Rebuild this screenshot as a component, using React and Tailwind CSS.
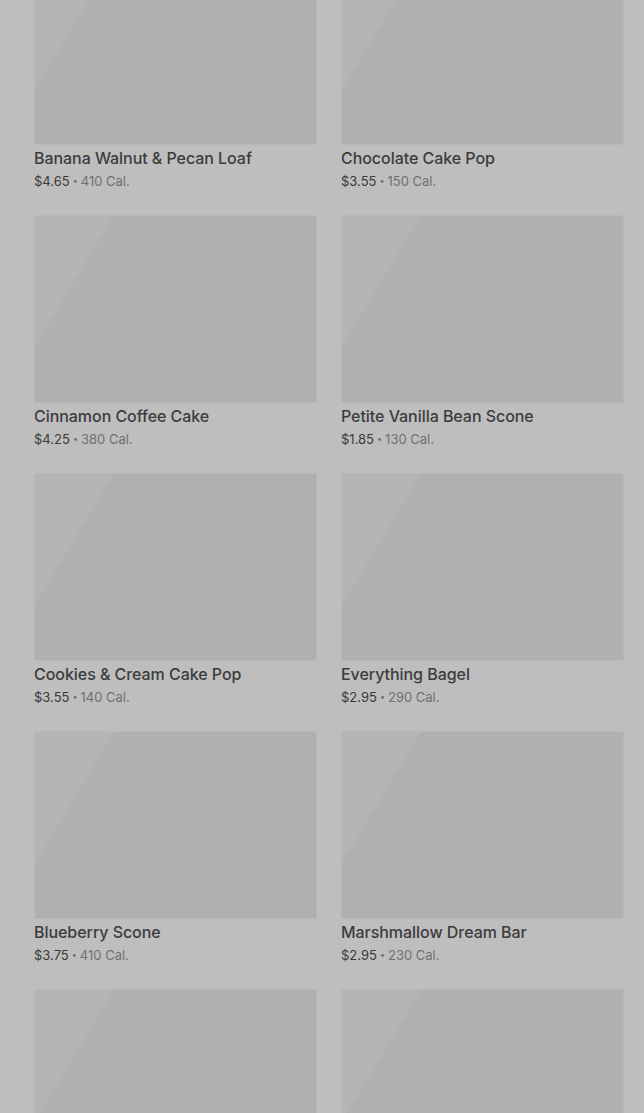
import React from "react";

const items = [
  { name: "Banana Walnut & Pecan Loaf", price: "$4.65", cal: "410 Cal." },
  { name: "Chocolate Cake Pop", price: "$3.55", cal: "150 Cal." },
  { name: "Cinnamon Coffee Cake", price: "$4.25", cal: "380 Cal." },
  { name: "Petite Vanilla Bean Scone", price: "$1.85", cal: "130 Cal." },
  { name: "Cookies & Cream Cake Pop", price: "$3.55", cal: "140 Cal." },
  { name: "Everything Bagel", price: "$2.95", cal: "290 Cal." },
  { name: "Blueberry Scone", price: "$3.75", cal: "410 Cal." },
  { name: "Marshmallow Dream Bar", price: "$2.95", cal: "230 Cal." },
  { name: "", price: "", cal: "" },
  { name: "", price: "", cal: "" },
];

function Card({ item }) {
  return (
    <div className="flex flex-col">
      <div className="h-[188px] rounded-[2px] border border-[#b7b7b7] bg-[linear-gradient(121deg,#b5b5b5_0%,#b5b5b5_20%,#b0b0b0_20%,#b0b0b0_100%)]" />
      {item.name && (
        <>
          <div className="mt-[1px] h-6 text-[16px] leading-6 font-medium text-[#3c3c3c] tracking-[-0.05px]">
            {item.name}
          </div>
          <div className="mt-[2px] h-[18px] flex items-center text-[13px] leading-[18px]">
            <span className="text-[#3a3a3a]">{item.price}</span>
            <span className="text-[#707070] text-[9px] mx-[3px]">•</span>
            <span className="text-[#707070]">{item.cal}</span>
          </div>
        </>
      )}
    </div>
  );
}

export default function App() {
  return (
    <div className="h-[1113px] overflow-hidden bg-[#bebebe] font-['Inter',sans-serif]">
      <div className="-mt-[43px] pl-[34px] pr-[20px] grid grid-cols-2 gap-x-6 gap-y-[25px]">
        {items.map((item, i) => (
          <Card key={i} item={item} />
        ))}
      </div>
    </div>
  );
}
